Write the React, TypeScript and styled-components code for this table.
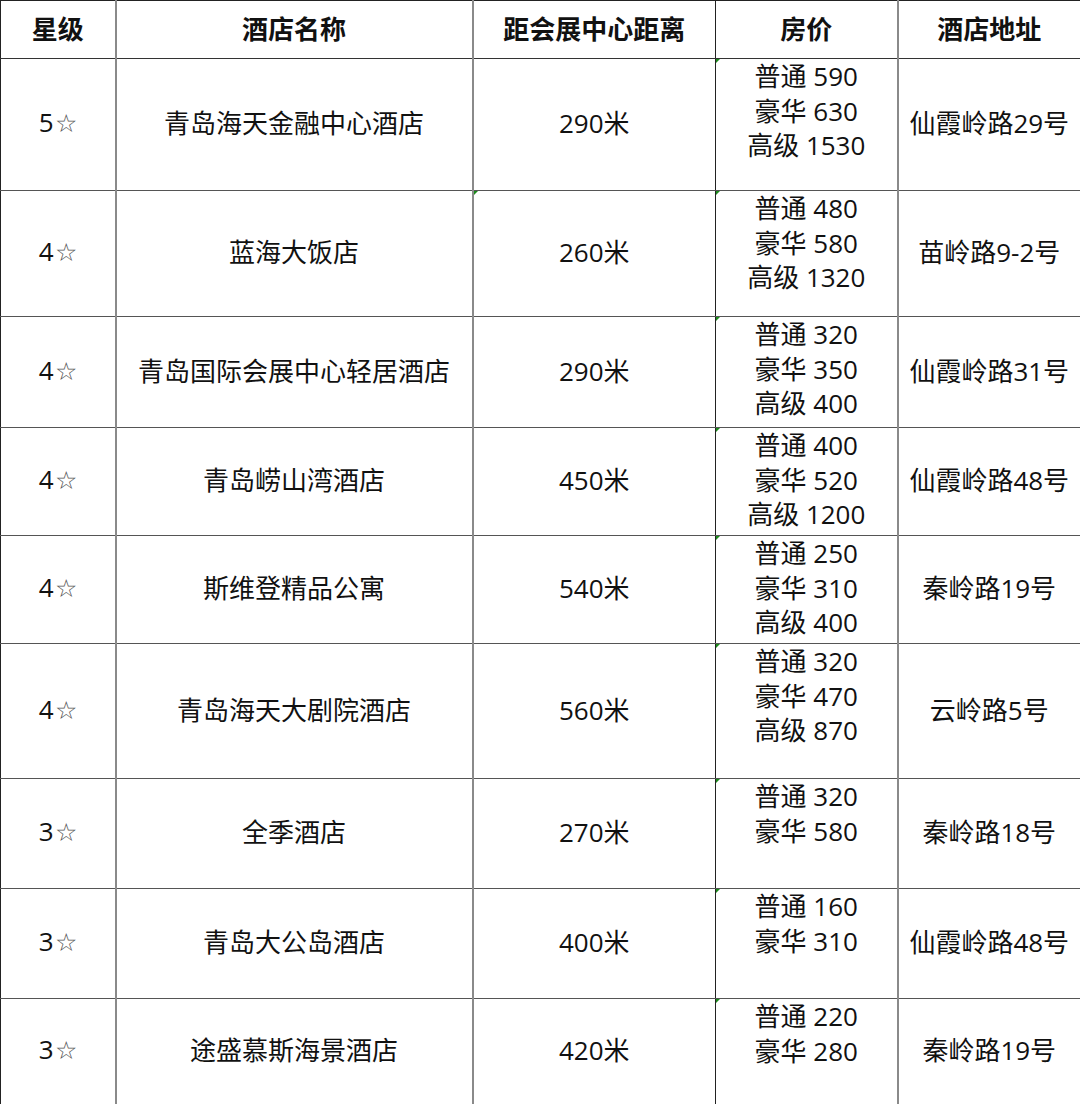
import React from 'react';
import styled, { createGlobalStyle } from 'styled-components';

const GlobalStyle = createGlobalStyle`
  html, body {
    margin: 0;
    padding: 0;
    background: #fff;
  }
  body {
    font-family: "Open Sans", "Noto Sans CJK SC", sans-serif;
    color: #111;
  }
`;

interface Hotel {
  star: number;
  name: string;
  distance: string;
  prices: string[];
  address: string;
  height: number;
  distanceMark?: boolean;
}

const hotels: Hotel[] = [
  { star: 5, name: '青岛海天金融中心酒店', distance: '290米', prices: ['普通 590', '豪华 630', '高级 1530'], address: '仙霞岭路29号', height: 132 },
  { star: 4, name: '蓝海大饭店', distance: '260米', prices: ['普通 480', '豪华 580', '高级 1320'], address: '苗岭路9-2号', height: 126, distanceMark: true },
  { star: 4, name: '青岛国际会展中心轻居酒店', distance: '290米', prices: ['普通 320', '豪华 350', '高级 400'], address: '仙霞岭路31号', height: 111 },
  { star: 4, name: '青岛崂山湾酒店', distance: '450米', prices: ['普通 400', '豪华 520', '高级 1200'], address: '仙霞岭路48号', height: 108 },
  { star: 4, name: '斯维登精品公寓', distance: '540米', prices: ['普通 250', '豪华 310', '高级 400'], address: '秦岭路19号', height: 108 },
  { star: 4, name: '青岛海天大剧院酒店', distance: '560米', prices: ['普通 320', '豪华 470', '高级 870'], address: '云岭路5号', height: 135 },
  { star: 3, name: '全季酒店', distance: '270米', prices: ['普通 320', '豪华 580'], address: '秦岭路18号', height: 110 },
  { star: 3, name: '青岛大公岛酒店', distance: '400米', prices: ['普通 160', '豪华 310'], address: '仙霞岭路48号', height: 110 },
  { star: 3, name: '途盛慕斯海景酒店', distance: '420米', prices: ['普通 220', '豪华 280'], address: '秦岭路19号', height: 106 },
];

const columns = [
  { title: '星级', width: 115, soft: false },
  { title: '酒店名称', width: 357, soft: true },
  { title: '距会展中心距离', width: 243, soft: true },
  { title: '房价', width: 182, soft: false },
  { title: '酒店地址', width: 183, soft: true },
];

const Table = styled.table`
  width: 1080px;
  border-collapse: collapse;
  table-layout: fixed;
  font-size: 26px;
`;

const Row = styled.tr<{ $h: number }>`
  height: ${({ $h }) => $h}px;
`;

const HeadCell = styled.th<{ $soft: boolean }>`
  font-weight: 700;
  text-align: center;
  vertical-align: middle;
  padding: 0 0 2px;
  line-height: 34px;
  border-top: 1px solid #222;
  border-bottom: 1px solid #333;
  border-left: ${({ $soft }) => ($soft ? '2px solid #8a8a8a' : '1px solid #222')};
  border-right: 1px solid #222;
`;

const Cell = styled.td<{ $soft: boolean; $top?: boolean }>`
  position: relative;
  text-align: center;
  vertical-align: ${({ $top }) => ($top ? 'top' : 'middle')};
  padding: 0 0 2px;
  line-height: 34.7px;
  font-weight: 400;
  border-top: 1px solid #333;
  border-bottom: 1px solid #555;
  border-left: ${({ $soft }) => ($soft ? '2px solid #8a8a8a' : '1px solid #222')};
  border-right: 1px solid #222;
`;

const Star = styled.span`
  color: #555;
  font-family: "DejaVu Sans", sans-serif;
  font-size: 25px;
  font-weight: 300;
  margin-left: 1px;
`;

const PriceLine = styled.div`
  white-space: nowrap;
`;

const Marker = styled.span`
  position: absolute;
  top: 0;
  left: 0;
  width: 0;
  height: 0;
  border-top: 4px solid #1c8a1c;
  border-right: 4px solid transparent;
`;

const Colgroup = () => (
  <colgroup>
    {columns.map((c) => (
      <col key={c.title} style={{ width: c.width }} />
    ))}
  </colgroup>
);

const App: React.FC = () => (
  <>
    <GlobalStyle />
    <Table>
      <Colgroup />
      <thead>
        <Row $h={58}>
          {columns.map((c) => (
            <HeadCell key={c.title} $soft={c.soft}>
              {c.title}
            </HeadCell>
          ))}
        </Row>
      </thead>
      <tbody>
        {hotels.map((h) => (
          <Row key={h.name} $h={h.height}>
            <Cell $soft={false}>
              {h.star}
              <Star>☆</Star>
            </Cell>
            <Cell $soft>{h.name}</Cell>
            <Cell $soft>
              {h.distanceMark && <Marker />}
              {h.distance}
            </Cell>
            <Cell $soft={false} $top>
              <Marker />
              {h.prices.map((p) => (
                <PriceLine key={p}>{p}</PriceLine>
              ))}
            </Cell>
            <Cell $soft>{h.address}</Cell>
          </Row>
        ))}
      </tbody>
    </Table>
  </>
);

export default App;
